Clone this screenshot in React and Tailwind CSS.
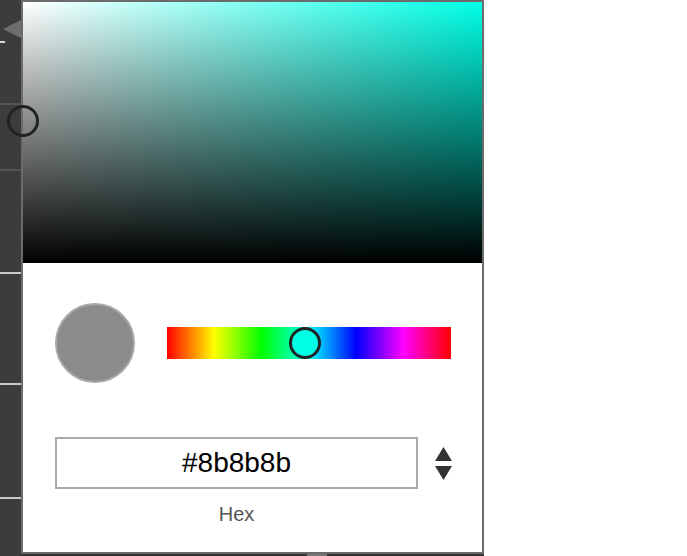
export default function App() {
  return (
    <div className="w-[687px] h-[556px] flex bg-white overflow-hidden font-['Liberation_Sans',Arial,sans-serif]">
      {/* dark app column behind the popover */}
      <div className="relative w-[21px] h-full bg-[#3c3c3c] flex flex-col shrink-0">
        <div className="h-[41px] shrink-0" />
        <div className="h-[2px] w-[5px] bg-[#d8d8d8] shrink-0" />
        <div className="h-[60px] shrink-0" />
        <div className="h-[2px] bg-[#555555] shrink-0" />
        <div className="h-[64px] shrink-0" />
        <div className="h-[2px] bg-[#555555] shrink-0" />
        <div className="h-[101px] shrink-0" />
        <div className="h-[2px] bg-[#c9c9c9] shrink-0" />
        <div className="h-[109px] shrink-0" />
        <div className="h-[2px] bg-[#c9c9c9] shrink-0" />
        <div className="h-[112px] shrink-0" />
        <div className="h-[2px] bg-[#c9c9c9] shrink-0" />
        <svg className="absolute left-[3px] top-[20px]" width="18" height="18" viewBox="0 0 18 18">
          <polygon points="0,9 18,0 18,18" fill="#6e6e6e" />
        </svg>
      </div>

      {/* popover */}
      <div className="w-[463px] h-full flex flex-col shrink-0">
        <div className="h-[554px] border-2 border-[#6b6b6b] bg-white flex flex-col shrink-0">
          {/* saturation / value area */}
          <div className="relative h-[261px] bg-[#00ffe6] shrink-0">
            <div className="absolute inset-0 bg-[linear-gradient(to_right,#ffffff,rgba(255,255,255,0))]" />
            <div className="absolute inset-0 bg-[linear-gradient(to_top,#000000,rgba(0,0,0,0))]" />
            <div className="absolute left-[-16px] top-[103px] w-[32px] h-[32px] rounded-full border-[3px] border-[#222222]" />
          </div>

          {/* swatch + hue */}
          <div className="mt-[40px] flex items-center pl-[32px] pr-[31px] gap-[32px]">
            <div className="w-[80px] h-[80px] rounded-full bg-[#8b8b8b] border-2 border-[#a8a8a8] shrink-0" />
            <div className="relative flex-1 h-[32px] bg-[linear-gradient(to_right,#ff0000,#ffff00,#00ff00,#00ffff,#0000ff,#ff00ff,#ff0000)]">
              <div className="absolute left-[122px] top-0 w-[32px] h-[32px] rounded-full border-[3px] border-[#222222] bg-[#00ffe6]" />
            </div>
          </div>

          {/* hex input */}
          <div className="mt-[54px] flex items-center pl-[32px]">
            <div className="w-[363px] h-[52px] border-2 border-[#aaaaaa] flex items-center justify-center text-[28px] text-black shrink-0">
              #8b8b8b
            </div>
            <div className="ml-[17px] w-[17px] flex flex-col items-center gap-[5px]">
              <svg width="17" height="14" viewBox="0 0 17 14">
                <polygon points="8.5,0 17,14 0,14" fill="#333333" />
              </svg>
              <svg width="17" height="14" viewBox="0 0 17 14">
                <polygon points="0,0 17,0 8.5,14" fill="#333333" />
              </svg>
            </div>
          </div>
          <div className="ml-[32px] w-[363px] mt-[13px] text-center text-[20px] leading-[24px] text-[#555555]">
            Hex
          </div>
        </div>
        <div className="h-[2px] bg-[#333333] flex shrink-0">
          <div className="w-[286px]" />
          <div className="w-[20px] bg-[#777777]" />
        </div>
      </div>

      <div className="flex-1 h-full bg-white" />
    </div>
  );
}
